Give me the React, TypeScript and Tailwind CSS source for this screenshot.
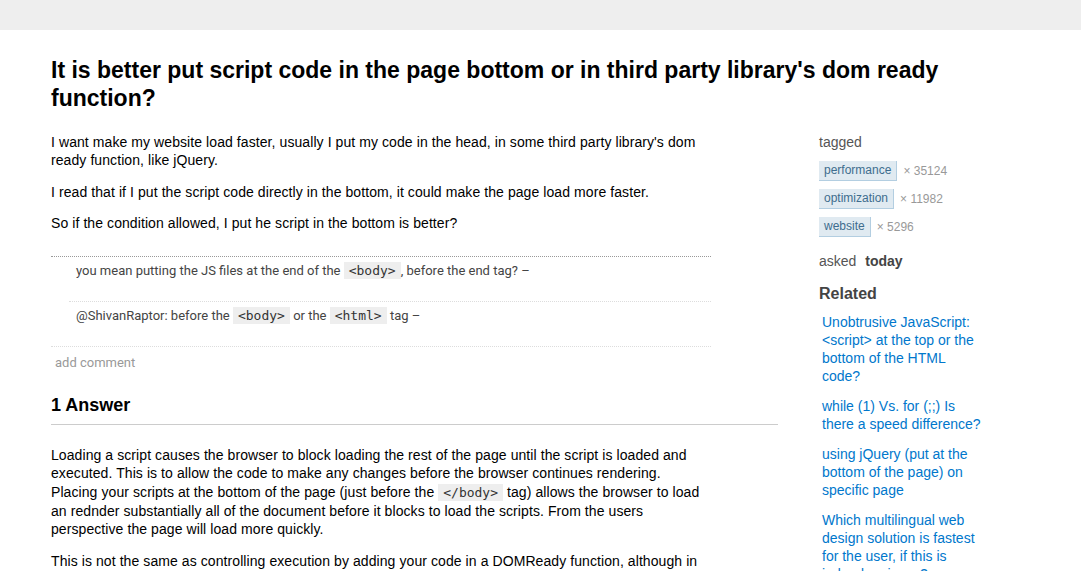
const sans = "font-['Liberation_Sans',Arial,sans-serif]";

function Code({ children }: { children: React.ReactNode }) {
  return (
    <code className="bg-[#eeeeee] px-[5px] py-[1px] font-['DejaVu_Sans_Mono',monospace] text-[13px] tracking-normal text-[#333]">
      {children}
    </code>
  );
}

const tags = [
  { name: "performance", count: "35124" },
  { name: "optimization", count: "11982" },
  { name: "website", count: "5296" },
];

const related = [
  "Unobtrusive JavaScript: <script> at the top or the bottom of the HTML code?",
  "while (1) Vs. for (;;) Is there a speed difference?",
  "using jQuery (put at the bottom of the page) on specific page",
  "Which multilingual web design solution is fastest for the user, if this is indeed an issue?",
];

export default function App() {
  return (
    <div className={`min-h-screen bg-white text-black ${sans}`}>
      {/* top bar */}
      <div className="h-[30px] bg-[#eeeeee]" />

      <div className="pl-[51px] pt-[26px]">
        <h1 className="w-[930px] text-[23px] font-bold leading-[28px] text-black">
          It is better put script code in the page bottom or in third party library's dom ready function?
        </h1>

        <div className="mt-[21px] flex">
          {/* main column */}
          <div className="w-[727px] shrink-0">
            <div className="w-[656px] text-[14px] leading-[18px] tracking-[0.08px]">
              <p className="mb-[14px]">
                I want make my website load faster, usually I put my code in the head, in some third party library's dom ready function, like jQuery.
              </p>
              <p className="mb-[13px]">
                I read that if I put the script code directly in the bottom, it could make the page load more faster.
              </p>
              <p>So if the condition allowed, I put he script in the bottom is better?</p>
            </div>

            {/* comments */}
            <div className="mt-[24px] w-[660px] border-t border-b border-dotted border-t-[#999] border-b-[#dddddd] font-['Roboto',sans-serif] text-[13px] leading-[18px] text-[#444]">
              <div className="h-[44px] pl-[25px] pt-[5px]">
                you mean putting the JS files at the end of the <Code>&lt;body&gt;</Code>, before the end tag? –
              </div>
              <div className="ml-[18px] h-[45px] border-t border-dotted border-[#dddddd] pl-[7px] pt-[5px]">
                @ShivanRaptor: before the <Code>&lt;body&gt;</Code> or the <Code>&lt;html&gt;</Code> tag –
              </div>
            </div>
            <div className="mt-[7px] pl-[4px] font-['Roboto',sans-serif] text-[13px] leading-[18px] text-[#999]">
              add comment
            </div>

            <h2 className="mt-[21px] border-b border-[#cccccc] pb-[7px] text-[18px] font-bold leading-[24px]">
              1 Answer
            </h2>

            <div className="mt-[21px] w-[656px] text-[14px] leading-[18.3px] tracking-[0.08px]">
              <p className="mb-[14px]">
                Loading a script causes the browser to block loading the rest of the page until the script is loaded and executed. This is to allow the code to make any changes before the browser continues rendering. Placing your scripts at the bottom of the page (just before the <Code>&lt;/body&gt;</Code> tag) allows the browser to load an rednder substantially all of the document before it blocks to load the scripts. From the users perspective the page will load more quickly.
              </p>
              <p>
                This is not the same as controlling execution by adding your code in a DOMReady function, although in practice the effect for the user is often very similar, since the scripts run once the document has been parsed.
              </p>
            </div>
          </div>

          {/* sidebar */}
          <div className="ml-[41px] w-[165px] shrink-0">
            <div className="text-[14px] leading-[18px] text-[#555]">tagged</div>
            <div className="mt-[10px] flex flex-col gap-[8px]">
              {tags.map((t) => (
                <div key={t.name} className="flex items-center">
                  <span className="h-[20px] border-r border-b border-[#b3cee1] bg-[#e0eaf1] px-[5px] text-[12px] leading-[19px] text-[#3e6d8e]">
                    {t.name}
                  </span>
                  <span className="ml-[6px] text-[12px] text-[#999]">× {t.count}</span>
                </div>
              ))}
            </div>
            <div className="mt-[15px] text-[14px] leading-[18px] text-[#555]">
              asked <b className="ml-[5px] text-[#444]">today</b>
            </div>
            <div className="mt-[14px] text-[16px] font-bold leading-[20px] text-[#444]">Related</div>
            <div className="mt-[9px] flex flex-col gap-[12px] pl-[3px] text-[14px] leading-[18px] text-[#0077cc]">
              {related.map((r) => (
                <a key={r} href="#" className="block">
                  {r}
                </a>
              ))}
            </div>
          </div>
        </div>
      </div>
    </div>
  );
}
